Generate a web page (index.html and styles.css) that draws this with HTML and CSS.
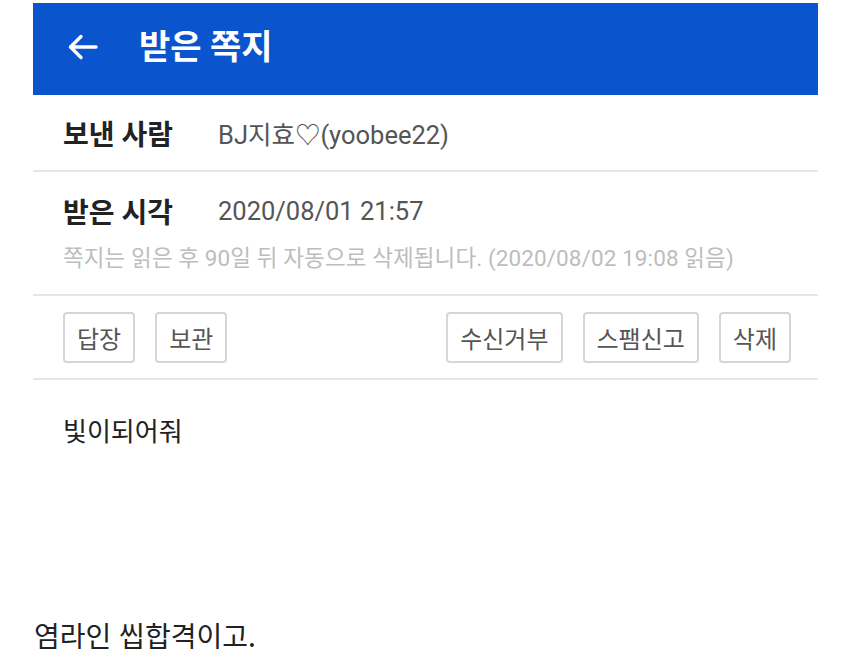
FILE: index.html
```html
<!DOCTYPE html>
<html lang="ko">
<head>
<meta charset="utf-8">
<link rel="stylesheet" href="styles.css">
</head>
<body>
<div class="app">
  <header class="topbar">
    <svg class="back" width="32" height="28" viewBox="0 0 32 28" aria-hidden="true">
      <path d="M29 14H4M14 3.5L3.5 14L14 24.5" fill="none" stroke="#fff" stroke-width="3.4" stroke-linecap="round" stroke-linejoin="round"/>
    </svg>
    <h1 class="title">받은 쪽지</h1>
  </header>
  <section class="row row-sender">
    <span class="label">보낸 사람</span>
    <span class="value">BJ지효♡(yoobee22)</span>
  </section>
  <section class="row row-time">
    <div class="line">
      <span class="label">받은 시각</span>
      <span class="value">2020/08/01 21:57</span>
    </div>
    <p class="note">쪽지는 읽은 후 90일 뒤 자동으로 삭제됩니다. (2020/08/02 19:08 읽음)</p>
  </section>
  <section class="row row-actions">
    <div class="group">
      <button class="btn">답장</button>
      <button class="btn">보관</button>
    </div>
    <div class="group">
      <button class="btn">수신거부</button>
      <button class="btn">스팸신고</button>
      <button class="btn">삭제</button>
    </div>
  </section>
  <section class="message">빛이되어줘</section>
</div>
<p class="caption">염라인 씹합격이고.</p>
</body>
</html>
```
FILE: styles.css
```css
* { box-sizing: border-box; }
html, body { margin: 0; padding: 0; background: #fff; }
body {
  font-family: Roboto, "Noto Sans CJK KR", sans-serif;
  color: #222;
  width: 850px;
}
.app {
  margin: 3px 0 0 33px;
  width: 785px;
}
.topbar {
  height: 92px;
  background: #0a55cd;
  display: flex;
  align-items: center;
  padding-left: 34px;
}
.back { display: block; margin-top: -4px; }
.title {
  margin: 0 0 0 40px;
  color: #fff;
  font-size: 34px;
  font-weight: 700;
  line-height: 1;
  margin-top: -4px;
}
.row {
  border-bottom: 2px solid #e6e6e6;
  padding: 0 0 0 30px;
}
.row-sender {
  height: 77px;
  display: flex;
  align-items: center;
}
.label {
  font-size: 28px;
  font-weight: 700;
  color: #222;
  width: 155px;
  flex: none;
}
.value {
  font-size: 25.5px;
  color: #555;
}
.row-time {
  height: 124px;
  padding-top: 20px;
}
.line { display: flex; align-items: center; height: 38px; }
.note {
  margin: 15px 0 0;
  font-size: 22.5px;
  letter-spacing: 0.1px;
  color: #bdbdbd;
  line-height: 1.2;
  white-space: nowrap;
}
.row-actions {
  height: 84px;
  display: flex;
  align-items: center;
  justify-content: space-between;
  padding-right: 27px;
}
.group { display: flex; gap: 20px; }
.btn {
  font-family: inherit;
  font-size: 24px;
  color: #555;
  background: #fff;
  border: 2px solid #d6d6d6;
  border-radius: 4px;
  height: 51px;
  padding: 0 12px;
  margin: 0;
}
.message {
  padding: 31px 0 0 30px;
  font-size: 26px;
  color: #222;
  height: 226px;
}
.caption {
  margin: 0;
  padding: 15px 0 0 34px;
  font-size: 28px;
  line-height: 28px;
  color: #222;
  font-family: "Noto Sans CJK KR", sans-serif;
}
```
